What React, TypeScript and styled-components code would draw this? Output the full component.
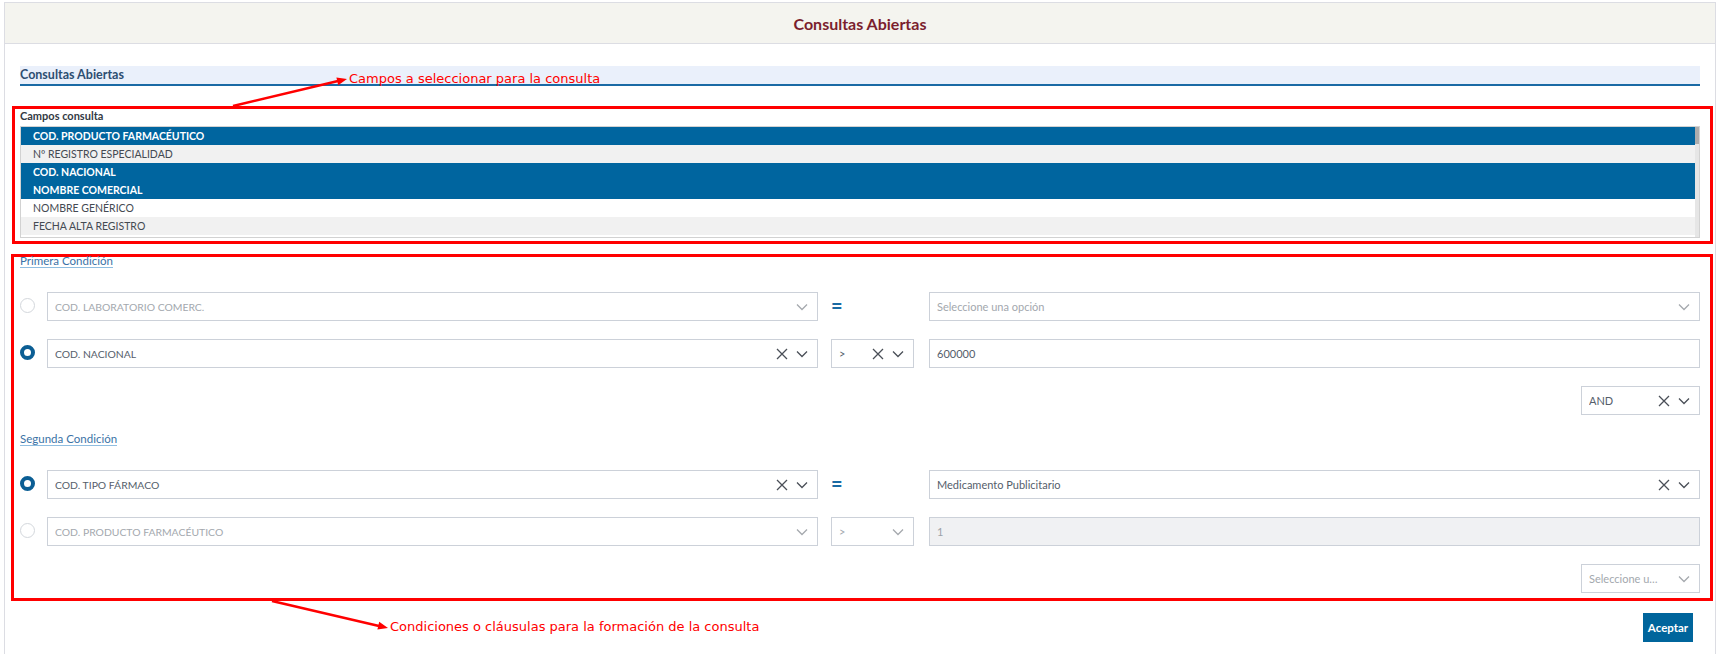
import React from "react";
import styled, { createGlobalStyle } from "styled-components";

const GlobalStyle = createGlobalStyle`
  html, body { margin: 0; padding: 0; background: #ffffff; }
  body { font-family: Lato, "Open Sans", "Liberation Sans", sans-serif; }
  * { box-sizing: border-box; }
`;

const Page = styled.div`
  position: relative;
  height: 654px;
  overflow: hidden;
  padding: 2px 7px 0 4px;
`;

const Card = styled.div`
  border: 1px solid #dcdde3;
  min-height: 720px;
  background: #ffffff;
`;

const Header = styled.header`
  height: 41px;
  background: #f4f4ef;
  border-bottom: 1px solid #dcdde3;
  display: flex;
  align-items: center;
  justify-content: center;
`;

const HeaderTitle = styled.h1`
  margin: 0;
  font-size: 16px;
  font-weight: 700;
  color: #7b1e2e;
`;

const Body = styled.div`
  padding: 0 15px;
`;

const SectionBar = styled.div`
  margin-top: 22px;
  height: 20px;
  background: #eaf0fb;
  border-bottom: 2px solid #1a6aa5;
  font-size: 12.5px;
  font-weight: 700;
  color: #2d4e72;
  line-height: 18px;
`;

const RedFrame = styled.section<{ $left: number; $top: number; $bottom: number }>`
  margin: ${(p) => p.$top}px -13px 0 ${(p) => -p.$left}px;
  border: 3px solid #ff0000;
  padding: 0 10px ${(p) => p.$bottom}px ${(p) => p.$left - 3}px;
`;

const FieldLabel = styled.div`
  font-size: 11px;
  font-weight: 700;
  color: #333a44;
  line-height: 13px;
  padding-bottom: 4px;
`;

const ListBox = styled.div`
  display: flex;
  height: 112px;
  border: 1px solid #d2d2d2;
  overflow: hidden;
`;

const ListRows = styled.div`
  flex: 1;
  overflow: hidden;
`;

const ListRow = styled.div<{ $selected: boolean; $alt: boolean }>`
  height: 18px;
  line-height: 18px;
  padding-left: 12px;
  font-size: 10.5px;
  font-weight: ${(p) => (p.$selected ? 700 : 400)};
  color: ${(p) => (p.$selected ? "#ffffff" : "#444a52")};
  background: ${(p) => (p.$selected ? "#00659f" : p.$alt ? "#f1f1f1" : "#ffffff")};
`;

const ScrollTrack = styled.div`
  width: 4px;
  background: #e6e6e6;
`;

const ScrollThumb = styled.div`
  height: 17px;
  background: #adadad;
`;

const CondLabelLine = styled.div<{ $top: number }>`
  margin-top: ${(p) => p.$top}px;
  line-height: 13px;
`;

const CondLabel = styled.span`
  display: inline-block;
  font-size: 11.5px;
  color: #3a72a6;
  border-bottom: 1px solid #8fbde0;
`;

const CondRow = styled.div<{ $top: number }>`
  display: grid;
  grid-template-columns: 27px 1fr 111px 1fr;
  align-items: center;
  margin-top: ${(p) => p.$top}px;
`;

const Radio = styled.span<{ $on: boolean }>`
  display: block;
  width: 15px;
  height: 15px;
  border-radius: 50%;
  background: #ffffff;
  margin-top: -3px;
  border: ${(p) => (p.$on ? "4px solid #0b5e94" : "1px solid #d3d7dc")};
`;

const SelectBox = styled.div<{ $muted?: boolean; $width?: number }>`
  display: flex;
  align-items: center;
  gap: 6px;
  height: 29px;
  width: ${(p) => (p.$width ? `${p.$width}px` : "auto")};
  border: 1px solid #ccd1d9;
  background: #ffffff;
  padding: 0 8px 0 7px;
  font-size: 11px;
  color: ${(p) => (p.$muted ? "#a3a8ae" : "#555e6b")};
`;

const SelectText = styled.span<{ $upper?: boolean }>`
  flex: 1;
  min-width: 0;
  white-space: nowrap;
  overflow: hidden;
  font-size: ${(p) => (p.$upper ? "10.4px" : "11px")};
  text-transform: ${(p) => (p.$upper ? "uppercase" : "none")};
`;

const OpCell = styled.div`
  padding: 0 15px 0 13px;
  display: flex;
  align-items: center;
`;

const EqualsSign = styled.span`
  font-size: 20px;
  font-weight: 700;
  color: #1a6aa3;
  line-height: 20px;
  margin-top: -3px;
`;

const TextField = styled.input<{ $disabled?: boolean }>`
  height: 29px;
  width: 100%;
  border: 1px solid #ccd1d9;
  padding: 0 7px;
  font-family: inherit;
  font-size: 11px;
  color: ${(p) => (p.$disabled ? "#9da2a8" : "#555e6b")};
  background: ${(p) => (p.$disabled ? "#f0f1f3" : "#ffffff")};
  outline: none;
`;

const RightRow = styled.div<{ $top: number }>`
  display: flex;
  justify-content: flex-end;
  margin-top: ${(p) => p.$top}px;
`;

const Footer = styled.div`
  display: flex;
  justify-content: flex-end;
  margin-top: 12px;
  padding-right: 7px;
`;

const AcceptButton = styled.button`
  width: 50px;
  height: 29px;
  border: none;
  background: #00659c;
  color: #ffffff;
  font-family: inherit;
  font-size: 11.5px;
  font-weight: 700;
  padding: 0;
`;

const Note = styled.div<{ $x: number; $y: number }>`
  position: absolute;
  left: ${(p) => p.$x}px;
  top: ${(p) => p.$y}px;
  font-family: "DejaVu Sans", Verdana, sans-serif;
  font-size: 13px;
  color: #ff0000;
  white-space: nowrap;
  line-height: 16px;
`;

const ArrowLayer = styled.svg`
  position: absolute;
  left: 0;
  top: 0;
  pointer-events: none;
`;

const IconBox = styled.span`
  display: inline-flex;
  width: 14px;
  justify-content: center;
  align-items: center;
`;

const ClearIcon = () => (
  <IconBox>
    <svg width="12" height="12" viewBox="0 0 12 12">
      <path d="M1 1 L11 11 M11 1 L1 11" stroke="#4a4f57" strokeWidth="1.3" fill="none" />
    </svg>
  </IconBox>
);

const Chevron = ({ muted }: { muted?: boolean }) => (
  <IconBox>
    <svg width="12" height="8" viewBox="0 0 12 8">
      <path d="M1 1.5 L6 6.5 L11 1.5" stroke={muted ? "#a5a9ae" : "#4a4f57"} strokeWidth="1.3" fill="none" />
    </svg>
  </IconBox>
);

type SelectProps = {
  text: string;
  muted?: boolean;
  clear?: boolean;
  upper?: boolean;
  width?: number;
};

const Select = ({ text, muted, clear, upper, width }: SelectProps) => (
  <SelectBox $muted={muted} $width={width}>
    <SelectText $upper={upper}>{text}</SelectText>
    {clear && <ClearIcon />}
    <Chevron muted={muted} />
  </SelectBox>
);

const fields = [
  { label: "COD. PRODUCTO FARMACÉUTICO", selected: true },
  { label: "Nº REGISTRO ESPECIALIDAD", selected: false },
  { label: "COD. NACIONAL", selected: true },
  { label: "NOMBRE COMERCIAL", selected: true },
  { label: "NOMBRE GENÉRICO", selected: false },
  { label: "FECHA ALTA REGISTRO", selected: false },
];

export default function App() {
  return (
    <>
      <GlobalStyle />
      <Page>
        <Card>
          <Header>
            <HeaderTitle>Consultas Abiertas</HeaderTitle>
          </Header>
          <Body>
            <SectionBar>Consultas Abiertas</SectionBar>

            <RedFrame $left={8} $top={20} $bottom={3}>
              <FieldLabel>Campos consulta</FieldLabel>
              <ListBox>
                <ListRows>
                  {fields.map((f, i) => (
                    <ListRow key={f.label} $selected={f.selected} $alt={i % 2 === 1}>
                      {f.label}
                    </ListRow>
                  ))}
                </ListRows>
                <ScrollTrack>
                  <ScrollThumb />
                </ScrollTrack>
              </ListBox>
            </RedFrame>

            <RedFrame $left={9} $top={10} $bottom={5}>
              <CondLabelLine $top={-5}>
                <CondLabel>Primera Condición</CondLabel>
              </CondLabelLine>
              <CondRow $top={24}>
                <Radio $on={false} />
                <Select text="COD. LABORATORIO COMERC." muted upper />
                <OpCell>
                  <EqualsSign>=</EqualsSign>
                </OpCell>
                <Select text="Seleccione una opción" muted />
              </CondRow>
              <CondRow $top={18}>
                <Radio $on={true} />
                <Select text="COD. NACIONAL" clear upper />
                <OpCell>
                  <Select text=">" clear width={83} />
                </OpCell>
                <TextField defaultValue="600000" />
              </CondRow>
              <RightRow $top={18}>
                <Select text="AND" clear width={119} />
              </RightRow>

              <CondLabelLine $top={15}>
                <CondLabel>Segunda Condición</CondLabel>
              </CondLabelLine>
              <CondRow $top={24}>
                <Radio $on={true} />
                <Select text="COD. TIPO FÁRMACO" clear upper />
                <OpCell>
                  <EqualsSign>=</EqualsSign>
                </OpCell>
                <Select text="Medicamento Publicitario" clear />
              </CondRow>
              <CondRow $top={18}>
                <Radio $on={false} />
                <Select text="COD. PRODUCTO FARMACÉUTICO" muted upper />
                <OpCell>
                  <Select text=">" muted width={83} />
                </OpCell>
                <TextField defaultValue="1" $disabled disabled />
              </CondRow>
              <RightRow $top={18}>
                <Select text="Seleccione u…" muted width={119} />
              </RightRow>
            </RedFrame>

            <Footer>
              <AcceptButton>Aceptar</AcceptButton>
            </Footer>
          </Body>
        </Card>

        <Note $x={349} $y={71}>Campos a seleccionar para la consulta</Note>
        <Note $x={390} $y={619}>Condiciones o cláusulas para la formación de la consulta</Note>
        <ArrowLayer width="1723" height="654" viewBox="0 0 1723 654">
          <line x1="233" y1="106" x2="338" y2="81" stroke="#ff0000" strokeWidth="2.5" />
          <polygon points="347,79 338.2,85.2 336.4,77.4" fill="#ff0000" />
          <line x1="272" y1="601" x2="379" y2="626" stroke="#ff0000" strokeWidth="2.5" />
          <polygon points="388,628 377.4,629.6 379.2,621.8" fill="#ff0000" />
        </ArrowLayer>
      </Page>
    </>
  );
}
